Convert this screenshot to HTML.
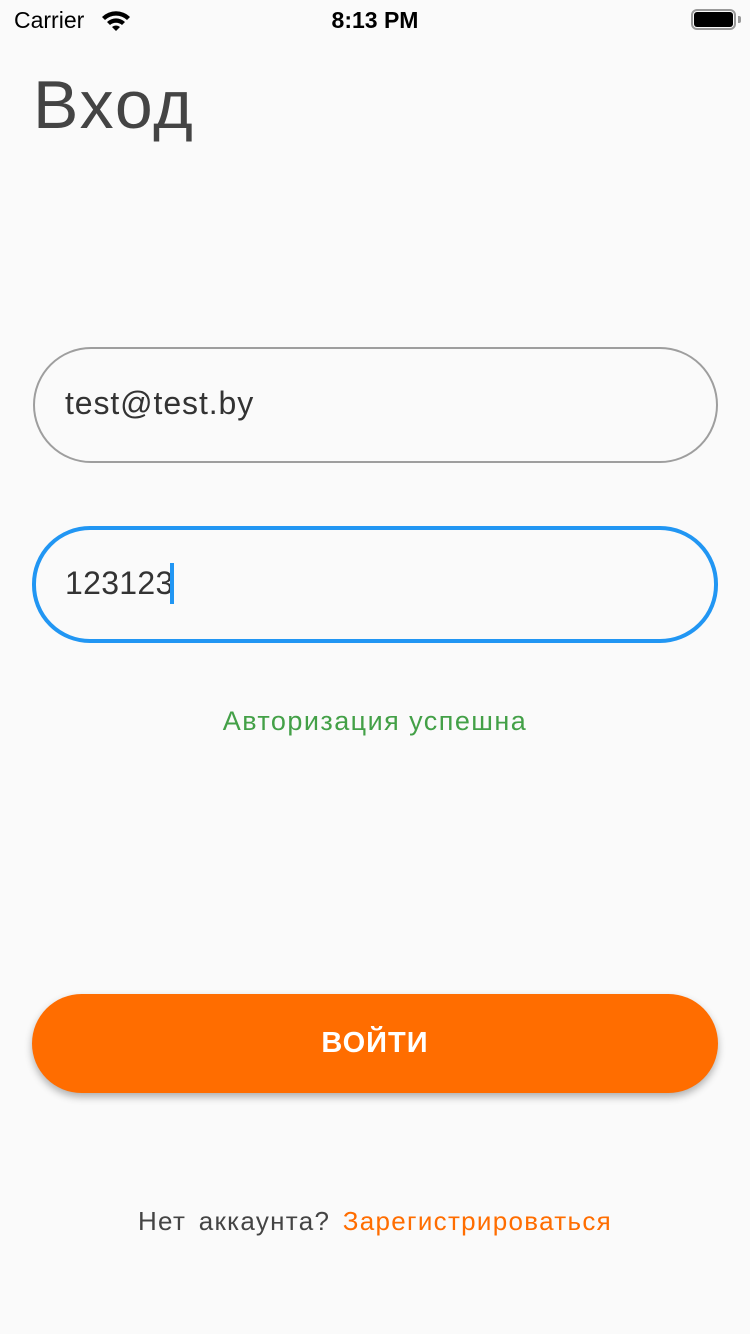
<!DOCTYPE html>
<html><head><meta charset="utf-8"><style>
*{margin:0;padding:0;box-sizing:border-box}
body{width:750px;height:1334px;background:#fafafa;font-family:"Liberation Sans","DejaVu Sans",sans-serif;position:relative;overflow:hidden}
.a{position:absolute}
</style></head><body>
<div class="a" style="left:14px;top:7px;font-size:23px;color:#000">Carrier</div>
<svg class="a" style="left:100px;top:9px" width="32" height="24" viewBox="0 0 32 24"><path d="M2 8 A20 20 0 0 1 30 8 L27 11 A16 16 0 0 0 5 11Z" fill="#000"/><path d="M7 13 A13 13 0 0 1 25 13 L22 16 A9 9 0 0 0 10 16Z" fill="#000"/><path d="M12 18 A6 6 0 0 1 20 18 L16 22Z" fill="#000"/></svg>
<div class="a" style="left:0;width:750px;top:7px;text-align:center;font-size:23px;font-weight:bold;color:#000">8:13 PM</div>
<div class="a" style="left:691px;top:9px;width:45px;height:21px;border:2px solid #999;border-radius:6px"></div>
<div class="a" style="left:694px;top:12px;width:39px;height:15px;background:#000;border-radius:3px"></div>
<div class="a" style="left:738px;top:16px;width:3px;height:7px;background:#999;border-radius:0 2px 2px 0"></div>
<div class="a" style="left:33px;top:66px;font-size:68px;color:#444;letter-spacing:2px">Вход</div>
<div class="a" style="left:33px;top:347px;width:685px;height:116px;border:2px solid #9e9e9e;border-radius:58px"></div>
<div class="a" style="left:65px;top:385px;font-size:32px;color:#333;letter-spacing:0.9px">test@test.by</div>
<div class="a" style="left:32px;top:526px;width:686px;height:117px;border:4px solid #2196f3;border-radius:58px"></div>
<div class="a" style="left:65px;top:565px;font-size:32px;color:#333;letter-spacing:0.3px">123123</div>
<div class="a" style="left:170px;top:563px;width:4px;height:41px;background:#2196f3"></div>
<div class="a" style="left:0;width:750px;top:706px;text-align:center;font-size:27px;color:#43a047;letter-spacing:1.45px">Авторизация успешна</div>
<div class="a" style="left:32px;top:994px;width:686px;height:99px;background:#ff6d00;border-radius:50px;box-shadow:0 4px 8px rgba(0,0,0,.3);color:#fff;font-size:29px;font-weight:bold;text-align:center;line-height:99px;letter-spacing:1px">ВОЙТИ</div>
<div class="a" style="left:0;width:750px;top:1206px;text-align:center;font-size:26px;color:#444;letter-spacing:1.3px;word-spacing:4px">Нет аккаунта? <span style="color:#ff6d00">Зарегистрироваться</span></div>
</body></html>
